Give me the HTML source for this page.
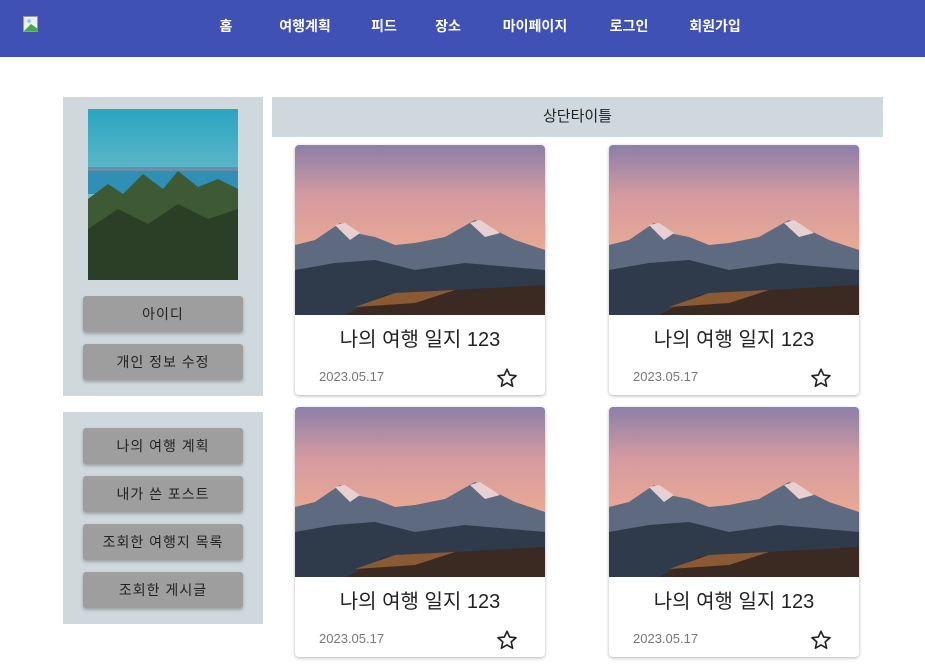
<!DOCTYPE html>
<html><head><meta charset="utf-8"><style>
*{margin:0;padding:0;box-sizing:border-box}
body{width:925px;height:671px;overflow:hidden;background:#fff;font-family:"Liberation Sans","Noto Sans CJK KR",sans-serif;position:relative}
.nav{position:absolute;left:0;top:0;width:925px;height:57px;background:#3f51b5}
.nav span{position:absolute;top:16px;color:#fff;font-size:14px;font-weight:600;transform:translateX(-50%)}
.panel{position:absolute;left:63px;width:200px;background:#cfd8dc}
.btn{position:absolute;left:20px;width:160px;height:36px;background:#9e9e9e;border-radius:3px;box-shadow:0 2px 3px rgba(0,0,0,.25);text-align:center;line-height:36px;font-size:14px;color:#222;letter-spacing:1px}
.hdr{position:absolute;left:272px;top:97px;width:611px;height:40px;background:#cfd8dc;text-align:center;line-height:40px;font-size:15px;color:#222}
.card{position:absolute;width:250px;height:250px;background:#fff;border-radius:4px;box-shadow:0 1px 3px rgba(0,0,0,.3);overflow:hidden}
.card svg{display:block}
.t{position:absolute;top:178px;width:100%;text-align:center;font-size:20px;color:#222}
.d{position:absolute;left:24px;top:224px;font-size:13px;color:#777}
.s{position:absolute;left:201px;top:222px}
</style></head><body>
<div class="nav">
<svg style="position:absolute;left:23px;top:16px" width="16" height="16"><rect x="0.5" y="0.5" width="14" height="15" fill="#eee" stroke="#999"/><path d="M1 15 L8 8 L15 13 L15 15Z" fill="#4a4"/><circle cx="6" cy="5" r="2" fill="#8cf"/></svg>
<span style="left:226px">홈</span><span style="left:305px">여행계획</span><span style="left:384px">피드</span><span style="left:448px">장소</span><span style="left:535px">마이페이지</span><span style="left:629px">로그인</span><span style="left:715px">회원가입</span>
</div>
<div class="panel" style="top:97px;height:299px">
<svg style="position:absolute;left:25px;top:12px" width="150" height="171"><defs><linearGradient id="sk" x1="0" y1="0" x2="0" y2="1"><stop offset="0" stop-color="#2aa5c0"/><stop offset="1" stop-color="#b5d6d6"/></linearGradient></defs><rect width="150" height="171" fill="url(#sk)"/><rect y="60" width="150" height="25" fill="#2f8fb5"/><rect y="58" width="150" height="4" fill="#6a8fa8"/><path d="M0 90 L20 75 L35 85 L55 65 L75 80 L90 62 L110 78 L130 70 L150 80 L150 171 L0 171Z" fill="#3d5a35"/><path d="M0 120 L30 100 L60 115 L90 95 L120 110 L150 100 L150 171 L0 171Z" fill="#2a3f25"/></svg>
<div class="btn" style="top:199px">아이디</div>
<div class="btn" style="top:247px">개인 정보 수정</div>
</div>
<div class="panel" style="top:412px;height:212px">
<div class="btn" style="top:16px">나의 여행 계획</div>
<div class="btn" style="top:64px">내가 쓴 포스트</div>
<div class="btn" style="top:112px">조회한 여행지 목록</div>
<div class="btn" style="top:160px">조회한 게시글</div>
</div>
<div class="hdr">상단타이틀</div>
<svg width="0" height="0" style="position:absolute"><defs>
<linearGradient id="g" x1="0" y1="0" x2="0" y2="1"><stop offset="0" stop-color="#8a80a8"/><stop offset=".3" stop-color="#d49aa0"/><stop offset=".6" stop-color="#e8a894"/><stop offset="1" stop-color="#c9a0a0"/></linearGradient>
<g id="m"><rect width="250" height="170" fill="url(#g)"/><path d="M0 100 L20 95 L45 78 L60 88 L80 92 L100 100 L120 98 L150 92 L180 75 L200 85 L220 95 L250 105 L250 170 L0 170Z" fill="#5d6a80"/><path d="M40 80 L50 78 L65 88 L55 95Z M175 78 L185 75 L205 88 L190 92Z" fill="#e8d0d0"/><path d="M0 125 L40 118 L80 115 L120 125 L170 118 L250 125 L250 170 L0 170Z" fill="#2f3a4a"/><path d="M50 170 L90 150 L160 145 L250 140 L250 170Z" fill="#3a2a22"/><path d="M60 162 L100 148 L160 145 L120 158Z" fill="#8a5a35"/></g>
</defs></svg>
<div class="card" style="left:295px;top:145px"><svg width="250" height="170"><use href="#m"/></svg><div class="t">나의 여행 일지 123</div><div class="d">2023.05.17</div><svg class="s" width="22" height="22" viewBox="0 0 24 24"><path d="M12 2.5l2.9 6.3 6.9.7-5.2 4.6 1.5 6.8L12 17.4l-6.1 3.5 1.5-6.8-5.2-4.6 6.9-.7z" fill="none" stroke="#222" stroke-width="1.8" stroke-linejoin="round"/></svg></div>
<div class="card" style="left:609px;top:145px"><svg width="250" height="170"><use href="#m"/></svg><div class="t">나의 여행 일지 123</div><div class="d">2023.05.17</div><svg class="s" width="22" height="22" viewBox="0 0 24 24"><path d="M12 2.5l2.9 6.3 6.9.7-5.2 4.6 1.5 6.8L12 17.4l-6.1 3.5 1.5-6.8-5.2-4.6 6.9-.7z" fill="none" stroke="#222" stroke-width="1.8" stroke-linejoin="round"/></svg></div>
<div class="card" style="left:295px;top:407px"><svg width="250" height="170"><use href="#m"/></svg><div class="t">나의 여행 일지 123</div><div class="d">2023.05.17</div><svg class="s" width="22" height="22" viewBox="0 0 24 24"><path d="M12 2.5l2.9 6.3 6.9.7-5.2 4.6 1.5 6.8L12 17.4l-6.1 3.5 1.5-6.8-5.2-4.6 6.9-.7z" fill="none" stroke="#222" stroke-width="1.8" stroke-linejoin="round"/></svg></div>
<div class="card" style="left:609px;top:407px"><svg width="250" height="170"><use href="#m"/></svg><div class="t">나의 여행 일지 123</div><div class="d">2023.05.17</div><svg class="s" width="22" height="22" viewBox="0 0 24 24"><path d="M12 2.5l2.9 6.3 6.9.7-5.2 4.6 1.5 6.8L12 17.4l-6.1 3.5 1.5-6.8-5.2-4.6 6.9-.7z" fill="none" stroke="#222" stroke-width="1.8" stroke-linejoin="round"/></svg></div>
</body></html>
